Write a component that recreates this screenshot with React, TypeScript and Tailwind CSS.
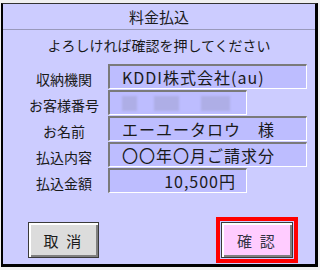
import React from "react";

const font = { fontFamily: '"Noto Sans CJK JP", "Noto Sans", sans-serif' };

type Field = { label: string; value?: React.ReactNode; short?: boolean; right?: boolean };

function MaskedNumber() {
  return (
    <div className="flex items-center h-full">
      <div className="w-[15px] h-[15px] bg-[#aeaee6] blur-[1px]" />
      <div className="ml-[17px] w-[25px] h-[15px] bg-[#aeaee6] blur-[1px]" />
      <div className="ml-[22px] w-[29px] h-[15px] bg-[#aeaee6] blur-[1px]" />
    </div>
  );
}

const fields: Field[] = [
  { label: "収納機関", value: "KDDI株式会社(au)" },
  { label: "お客様番号", value: <MaskedNumber />, short: true },
  { label: "お名前", value: "エーユータロウ　様" },
  { label: "払込内容", value: "〇〇年〇月ご請求分" },
  { label: "払込金額", value: "10,500円", short: true, right: true },
];

export default function App() {
  return (
    <div className="w-[320px] h-[270px] bg-[#f0f0f0] pt-[3px] pl-[1px] text-[#1a1a1a]" style={font}>
      <div className="w-[317px] h-[264px] bg-[#ccccff] border-t border-t-[#333333] border-l-2 border-r-[3px] border-b-[3px] border-black flex flex-col">
        {/* Title */}
        <div className="h-[26px] flex items-center justify-center text-[15px] leading-none border-b border-[#9999bb]">
          料金払込
        </div>

        {/* Instruction */}
        <div className="h-[30px] flex items-center justify-center text-[14px] leading-none">
          よろしければ確認を押してください
        </div>

        {/* Fields */}
        <div className="mt-[4px] flex flex-col gap-[1px] pl-[17px]">
          {fields.map((f) => (
            <div key={f.label} className="flex h-[25px]">
              <div className="w-[88px] flex items-center justify-center pt-[5px] text-[14px] leading-none">
                {f.label}
              </div>
              <div
                className={`${f.short ? "w-[139px]" : "w-[199px]"} h-[25px] bg-[#bdbdff] border-t-2 border-l-2 border-t-[#7a7a7a] border-l-[#7a7a7a] border-b border-r border-b-white border-r-white flex items-center text-[16px] leading-none tracking-[1px] ${f.right ? "justify-end pr-[10px]" : "pl-[12px]"}`}
              >
                {f.value}
              </div>
            </div>
          ))}
        </div>

        {/* Buttons */}
        <div className="mt-auto mb-[1px] h-[46px] flex items-center justify-between pl-[25px] pr-[17px]">
          <button className="w-[71px] h-[36px] bg-[#dcdcdc] border border-[#3a3a3a] shadow-[inset_2px_2px_0_#ffffff,inset_-2px_-2px_0_#808080] text-[15px] leading-none tracking-[0.15em]">
            取 消
          </button>
          <div className="w-[82px] h-[46px] border-4 border-[#ff0000] p-[1px]">
            <button className="w-full h-full bg-[#ffccff] border border-[#3a3a3a] shadow-[inset_2px_2px_0_#ffffff,inset_-2px_-2px_0_#808080] text-[15px] leading-none tracking-[0.15em] text-[#333344]">
              確 認
            </button>
          </div>
        </div>
      </div>
    </div>
  );
}
